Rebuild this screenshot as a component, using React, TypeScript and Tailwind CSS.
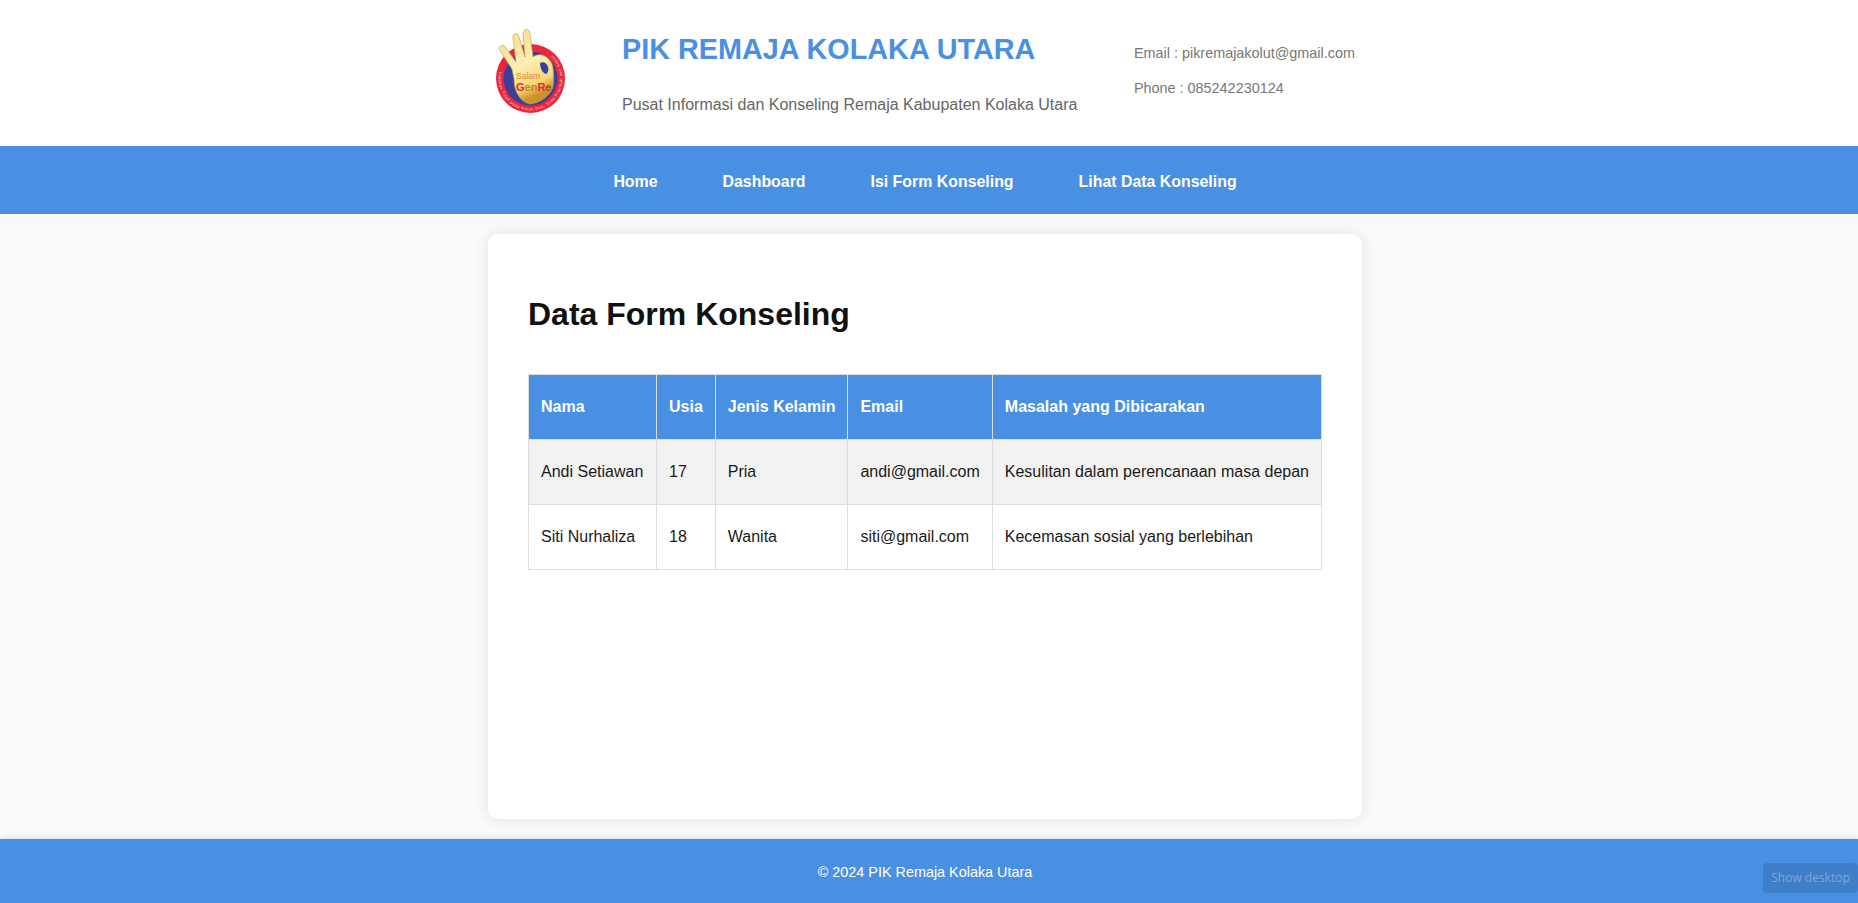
const rows = [
  ["Andi Setiawan", "17", "Pria", "andi@gmail.com", "Kesulitan dalam perencanaan masa depan"],
  ["Siti Nurhaliza", "18", "Wanita", "siti@gmail.com", "Kecemasan sosial yang berlebihan"],
];
const heads = ["Nama", "Usia", "Jenis Kelamin", "Email", "Masalah yang Dibicarakan"];

function Logo() {
  return (
    <svg width="70" height="86" viewBox="0 0 70 86" className="block">
      <defs>
        <path id="ringText" d="M3.2 43 A32 32 0 1 0 46 19.6" fill="none" />
        <linearGradient id="hand" x1="0" y1="0" x2="0.35" y2="1">
          <stop offset="0" stopColor="#f6dc8c" />
          <stop offset="0.55" stopColor="#fdeeb4" />
          <stop offset="0.85" stopColor="#f6d675" />
          <stop offset="1" stopColor="#c99428" />
        </linearGradient>
      </defs>
      <circle cx="34.5" cy="49.5" r="34.5" fill="#e8273c" />
      <circle cx="34.5" cy="49.5" r="27" fill="#38409a" />
      <text fontSize="4" letterSpacing="0.55" fill="#f6d6d0" fontFamily="Liberation Sans, sans-serif">
        <textPath href="#ringText">Katakan Tidak pada Nikah Dini, Seks Pranikah dan Napza</textPath>
      </text>
      <path
        d="M3 20 C3 16 8 15 10 19 L20 33 L17 9 C16 4 22 3 23 8 L29 28 L27 5 C27 -1 34 -1 34 5 L37 28 C42 24 50 25 55 33 C58 38 58 50 57 58 C54 67 44 74 34 75 C24 73 18 62 18 50 L16 40 Z"
        fill="url(#hand)"
        stroke="#c9a24a"
        strokeWidth="0.7"
      />
      <path d="M44 34 C47 32 51 34 52 38 C53 41 52 44 50 45 C47 44 44 40 44 34 Z" fill="#38409a" />
      <text x="20" y="50" fontSize="8.5" fill="#e8863c" fontFamily="Liberation Sans, sans-serif">Salam</text>
      <text x="20" y="62" fontSize="11" fontWeight="700" fontFamily="Liberation Sans, sans-serif">
        <tspan fill="#e8273c">G</tspan><tspan fill="#c9802c">en</tspan><tspan fill="#e8273c">R</tspan><tspan fill="#a8502c">e</tspan>
      </text>
    </svg>
  );
}

export default function App() {
  return (
    <div className="relative flex h-[903px] flex-col overflow-hidden bg-[#f9fafc] font-['Liberation_Sans',Arial,sans-serif]">
      <header className="flex h-[146px] items-center justify-center bg-white pr-[8px]">
        <div className="flex w-[874px] items-center">
          <div className="ml-[8px] w-[126px] shrink-0 pb-[2px]">
            <Logo />
          </div>
          <div className="w-[512px] shrink-0">
            <h1 className="mb-[30px] text-[28.8px] leading-[34px] font-bold text-[#4a90e2]">PIK REMAJA KOLAKA UTARA</h1>
            <p className="text-[16px] leading-[18px] text-[#666666]">Pusat Informasi dan Konseling Remaja Kabupaten Kolaka Utara</p>
          </div>
          <div className="mb-[6px] text-[14.4px] leading-[16px] text-[#777777]">
            <p className="mb-[19px]">Email : pikremajakolut@gmail.com</p>
            <p>Phone : 085242230124</p>
          </div>
        </div>
      </header>

      <nav className="flex h-[68px] items-center justify-center gap-[65px] bg-[#4a90e2] pt-[3px] pr-[8px] text-[15.9px] font-bold text-white">
        <a>Home</a>
        <a>Dashboard</a>
        <a>Isi Form Konseling</a>
        <a>Lihat Data Konseling</a>
      </nav>

      <main className="flex flex-1 justify-center pt-[20px] pr-[8px] pb-[20px]">
        <section className="w-[874px] rounded-[10px] bg-white p-[40px] shadow-[0_0_15px_rgba(0,0,0,0.1)]">
          <h2 className="mt-[22px] mb-[41px] text-[32px] leading-[37px] font-bold text-[#111111]">Data Form Konseling</h2>
          <table className="w-full border-collapse text-[16px] text-[#1a1a1a]">
            <thead>
              <tr className="h-[65px] bg-[#4a90e2] text-white">
                {heads.map((h, i) => (
                  <th key={h} className={i === 0 ? "w-[128px] border border-[#dddddd] px-[12px] text-left font-bold" : "border border-[#dddddd] px-[12px] text-left font-bold"}>{h}</th>
                ))}
              </tr>
            </thead>
            <tbody>
              {rows.map((r, i) => (
                <tr key={r[0]} className={i === 0 ? "h-[65px] bg-[#f2f2f2]" : "h-[65px] bg-white"}>
                  {r.map((c) => (
                    <td key={c} className="border border-[#dddddd] px-[12px]">{c}</td>
                  ))}
                </tr>
              ))}
            </tbody>
          </table>
        </section>
      </main>

      <footer className="flex h-[64px] items-center justify-center bg-[#4a90e2] pt-[3px] pr-[8px] text-[14.4px] text-white shadow-[0_-2px_5px_rgba(0,0,0,0.1)]">
        © 2024 PIK Remaja Kolaka Utara
      </footer>

      <div className="absolute right-0 bottom-[10px] flex h-[30px] w-[95px] items-center justify-center rounded-[4px] bg-[#3f7ec8] font-['Open_Sans',sans-serif] text-[12px] text-[#7ba7dc]">
        Show desktop
      </div>
    </div>
  );
}
